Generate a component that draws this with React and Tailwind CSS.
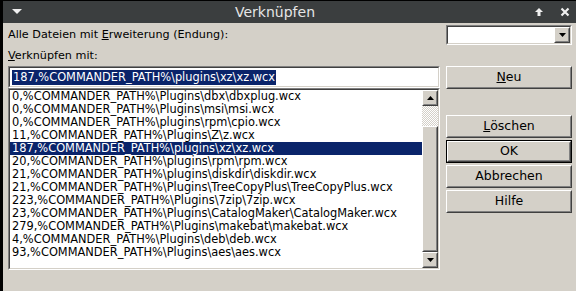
import React from "react";

const items = [
  "0,%COMMANDER_PATH%\\Plugins\\dbx\\dbxplug.wcx",
  "0,%COMMANDER_PATH%\\Plugins\\msi\\msi.wcx",
  "0,%COMMANDER_PATH%\\plugins\\rpm\\cpio.wcx",
  "11,%COMMANDER_PATH%\\Plugins\\Z\\z.wcx",
  "187,%COMMANDER_PATH%\\plugins\\xz\\xz.wcx",
  "20,%COMMANDER_PATH%\\plugins\\rpm\\rpm.wcx",
  "21,%COMMANDER_PATH%\\plugins\\diskdir\\diskdir.wcx",
  "21,%COMMANDER_PATH%\\Plugins\\TreeCopyPlus\\TreeCopyPlus.wcx",
  "223,%COMMANDER_PATH%\\Plugins\\7zip\\7zip.wcx",
  "23,%COMMANDER_PATH%\\Plugins\\CatalogMaker\\CatalogMaker.wcx",
  "279,%COMMANDER_PATH%\\Plugins\\makebat\\makebat.wcx",
  "4,%COMMANDER_PATH%\\Plugins\\deb\\deb.wcx",
  "93,%COMMANDER_PATH%\\Plugins\\aes\\aes.wcx",
];

const raised =
  "border border-t-white border-l-white border-r-[#404040] border-b-[#404040]";
const raisedInner =
  "border border-t-[#d4d0c8] border-l-[#d4d0c8] border-r-[#808080] border-b-[#808080]";

const Button = ({ children, def, className = "" }) => (
  <div className={`${def ? "border border-black" : ""} ${className}`}>
    <div className={`${raised} h-full`}>
      <div
        className={`${raisedInner} h-full flex items-center justify-center text-[12.5px] text-black`}
      >
        {children}
      </div>
    </div>
  </div>
);

const Arrow = ({ down }) => (
  <svg width="7" height="4" viewBox="0 0 7 4">
    {down ? (
      <path d="M0 0H7L3.5 4Z" fill="black" />
    ) : (
      <path d="M0 4H7L3.5 0Z" fill="black" />
    )}
  </svg>
);

const ScrollBtn = ({ down }) => (
  <div className={`${raised} h-[16px] w-[16px] bg-[#d4d0c8]`}>
    <div className={`${raisedInner} h-full flex items-center justify-center`}>
      <Arrow down={down} />
    </div>
  </div>
);

export default function App() {
  return (
    <div
      className="w-[576px] h-[291px] bg-black pt-[1px] pl-[3px] overflow-hidden"
      style={{ fontFamily: "'DejaVu Sans', sans-serif" }}
    >
      <div className="h-[290px] flex flex-col">
        {/* title bar */}
        <div className="h-[22px] bg-[#3b3e3f] flex items-center pl-[9px] pr-[6px] text-[#e6e6e6]">
          <svg width="10" height="6" viewBox="0 0 10 6">
            <path d="M0 0H10L5 5Z" fill="#f0f0f0" />
          </svg>
          <div className="flex-1 text-center text-[14px] pr-[6px]">Verknüpfen</div>
          <svg width="10" height="10" viewBox="0 0 10 10" className="mr-[16px]">
            <path d="M5 1L1 5H3.5V9H6.5V5H9Z" fill="#f0f0f0" />
          </svg>
          <svg width="10" height="10" viewBox="0 0 10 10">
            <path d="M1.5 1.5L8.5 8.5M8.5 1.5L1.5 8.5" stroke="#f0f0f0" strokeWidth="2.2" />
          </svg>
        </div>

        {/* body */}
        <div className="flex-1 bg-[#d4d0c8] pl-[5px] text-[11.2px] text-black">
          <div className="flex items-center h-[20px] mt-[2px]">
            <div className="w-[438px]">
              Alle Dateien mit <span className="underline">E</span>rweiterung (Endung):
            </div>
            <div className="w-[126px] h-[20px] border border-t-[#808080] border-l-[#808080] border-r-white border-b-white">
              <div className="h-full border border-t-[#404040] border-l-[#404040] border-r-[#d4d0c8] border-b-[#d4d0c8] bg-white flex justify-end">
                <ScrollBtn down />
              </div>
            </div>
          </div>
          <div className="h-[19px] leading-[19px] mt-[1px]">
            <span className="underline">V</span>erknüpfen mit:
          </div>

          <div className="flex gap-[6px] mt-[1px] text-[11.4px]">
            <div className="w-[432px] flex flex-col">
              <div className="h-[22px] border border-t-[#808080] border-l-[#808080] border-r-white border-b-white">
                <div className="h-full border border-t-[#404040] border-l-[#404040] border-r-[#d4d0c8] border-b-[#d4d0c8] bg-white flex items-center pl-[2px]">
                  <span className="bg-[#0a246a] text-white leading-[15px] px-[1px]">
                    187,%COMMANDER_PATH%\plugins\xz\xz.wcx
                  </span>
                </div>
              </div>
              <div className="h-[182px] border border-t-[#808080] border-l-[#808080] border-r-white border-b-white">
                <div className="h-full border border-t-[#404040] border-l-[#404040] border-r-[#d4d0c8] border-b-[#d4d0c8] bg-white flex">
                  <div className="flex-1 overflow-hidden">
                    {items.map((item, index) => (
                      <div
                        key={index}
                        className={`h-[13px] leading-[13px] pl-[2px] whitespace-nowrap ${
                          index === 4 ? "bg-[#0a246a] text-white" : ""
                        }`}
                      >
                        {item}
                      </div>
                    ))}
                  </div>
                  <div className="w-[16px] flex flex-col">
                    <ScrollBtn />
                    <div className="h-[20px] bg-[repeating-conic-gradient(#d4d0c8_0%_25%,#ffffff_0%_50%)] bg-[length:2px_2px]" />
                    <div className={`${raised} flex-1 bg-[#d4d0c8]`}>
                      <div className={`${raisedInner} h-full`} />
                    </div>
                    <ScrollBtn down />
                  </div>
                </div>
              </div>
            </div>

            <div className="w-[126px] flex flex-col">
              <Button className="h-[23px]">
                <span className="underline">N</span>eu
              </Button>
              <Button className="h-[23px] mt-[26px]">
                <span className="underline">L</span>öschen
              </Button>
              <Button def className="h-[23px] mt-[2px]">
                OK
              </Button>
              <Button className="h-[23px] mt-[2px]">Abbrechen</Button>
              <Button className="h-[23px] mt-[2px]">Hilfe</Button>
            </div>
          </div>
        </div>
      </div>
    </div>
  );
}
